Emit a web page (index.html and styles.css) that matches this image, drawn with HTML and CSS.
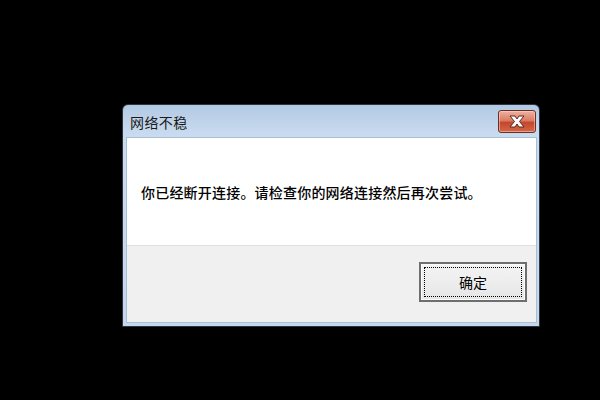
FILE: index.html
```html
<!DOCTYPE html>
<html lang="zh-CN">
<head>
<meta charset="utf-8">
<link rel="stylesheet" href="styles.css">
</head>
<body>
<div class="window">
  <div class="titlebar">
    <span class="title">网络不稳</span>
    <div class="close">
      <svg width="20" height="13" viewBox="0 0 20 13">
        <path d="M3 1 L8 1 L10 4 L12 1 L17 1 L12.5 6.5 L17 12 L12 12 L10 9 L8 12 L3 12 L7.5 6.5 Z" fill="#ffffff" stroke="#5a2a22" stroke-width="1" stroke-linejoin="round"/>
      </svg>
    </div>
  </div>
  <div class="client">
    <div class="message">你已经断开连接。请检查你的网络连接然后再次尝试。</div>
    <div class="footer">
      <div class="button"><span class="focus">确定</span></div>
    </div>
  </div>
</div>
</body>
</html>
```
FILE: styles.css
```css
html, body {
  margin: 0;
  padding: 0;
  background: #000;
  width: 600px;
  height: 400px;
  overflow: hidden;
  font-family: "Noto Sans CJK SC", "Liberation Sans", sans-serif;
}
.window {
  position: absolute;
  left: 122px;
  top: 104px;
  width: 416px;
  height: 221px;
  border: 1px solid #2c3440;
  border-radius: 6px 6px 0 0;
  background: linear-gradient(#b3c9e3, #c9dbef 30px, #c4d7ec);
  display: flex;
  flex-direction: column;
}
.titlebar {
  height: 32px;
  display: flex;
  align-items: center;
  justify-content: space-between;
  padding: 0 3px 0 7px;
}
.title {
  font-size: 14px;
  letter-spacing: 0.4px;
  color: #1a1a1a;
  margin-top: 2px;
}
.close {
  width: 36px;
  height: 21px;
  margin-top: 1px;
  border: 1px solid #6b2f24;
  border-radius: 3px;
  background: linear-gradient(#eeb2a2 0%, #dc7c66 45%, #c4472c 55%, #d66648 100%);
  box-shadow: inset 0 0 0 1px rgba(255,220,210,0.5);
  display: flex;
  align-items: center;
  justify-content: center;
}
.client {
  flex: 1;
  margin: 0 2px 3px 3px;
  border: 1px solid #a9bfd6;
  display: flex;
  flex-direction: column;
  background: #f0f0f0;
}
.message {
  height: 107px;
  background: #fff;
  display: flex;
  align-items: center;
  padding-left: 14px;
  font-size: 14px;
  font-weight: 500;
  letter-spacing: 0.2px;
  color: #000;
}
.footer {
  flex: 1;
  border-top: 1px solid #dfdfdf;
  display: flex;
  justify-content: flex-end;
  align-items: flex-start;
  padding: 16px 9px 0 0;
}
.button {
  width: 98px;
  height: 30px;
  border: 2px solid #6e6e6e;
  background: linear-gradient(#f4f4f4, #e6e6e6);
  box-shadow: inset 0 0 0 1px #fbfbfb;
  display: flex;
  padding: 3px;
}
.focus {
  flex: 1;
  border: 1px dotted #000;
  display: flex;
  align-items: center;
  justify-content: center;
  font-size: 14px;
  color: #000;
}
```
